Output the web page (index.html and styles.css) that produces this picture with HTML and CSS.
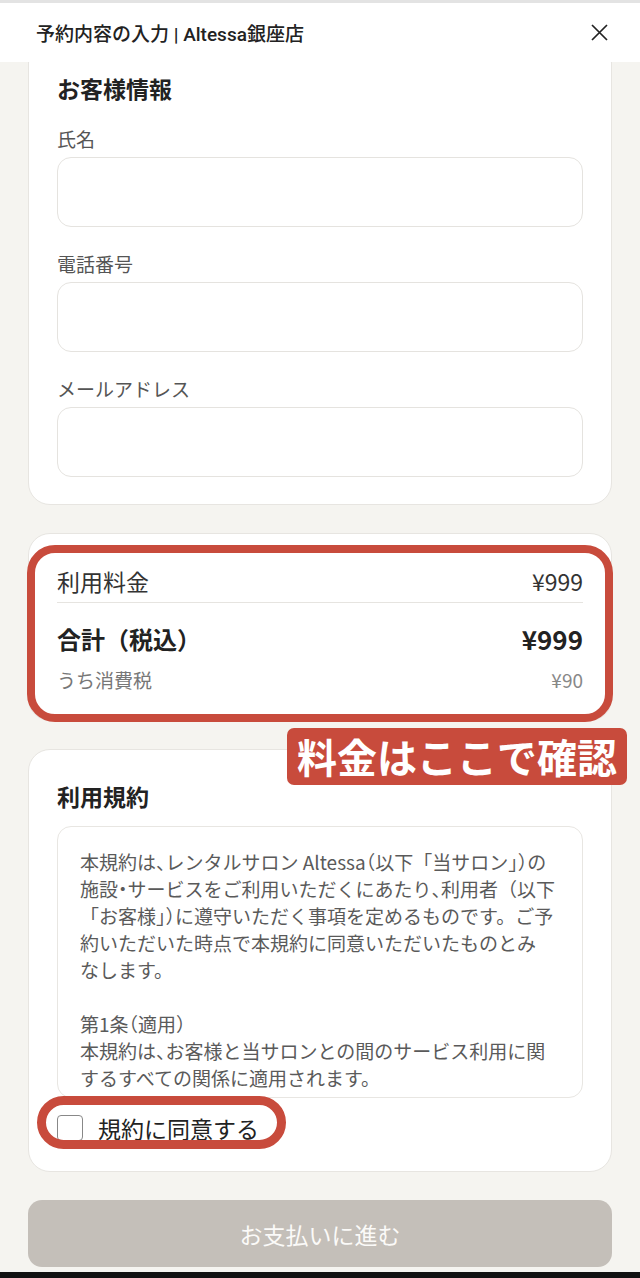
FILE: index.html
```html
<!DOCTYPE html>
<html lang="ja">
<head>
    <meta charset="UTF-8">
    <meta name="viewport" content="width=device-width, initial-scale=1.0">
    <title>予約内容の入力 | Altessa銀座店</title>
    <link rel="stylesheet" href="styles.css">
</head>
<body>
    <header class="header">
        <div class="header-title">予約内容の入力 | Altessa銀座店</div>
        <svg class="close-icon" viewBox="0 0 17 17" aria-label="閉じる">
            <path d="M1 1 L16 16 M16 1 L1 16" stroke="#222" stroke-width="1.7" fill="none"/>
        </svg>
    </header>

    <div class="container">
        <section class="card customer-card">
            <h2 class="card-title">お客様情報</h2>
            <div class="field">
                <label class="field-label">氏名</label>
                <input class="field-input" type="text">
            </div>
            <div class="field">
                <label class="field-label">電話番号</label>
                <input class="field-input" type="tel">
            </div>
            <div class="field">
                <label class="field-label">メールアドレス</label>
                <input class="field-input" type="email">
            </div>
        </section>

        <section class="card price-card">
            <div class="price-row base">
                <span>利用料金</span>
                <span>¥999</span>
            </div>
            <div class="price-row total">
                <span>合計（税込）</span>
                <span class="total-amount">¥999</span>
            </div>
            <div class="price-row tax">
                <span>うち消費税</span>
                <span class="tax-amount">¥90</span>
            </div>
            <div class="mark-frame"></div>
            <div class="mark-label">料金はここで確認</div>
        </section>

        <section class="card terms-card">
            <h2 class="card-title">利用規約</h2>
            <div class="terms-box">
                <p>本規約は<span class="half">、</span>レンタルサロン Altessa<span class="half">（</span>以下「当サロン<span class="half">」）</span>の<br>施設<span class="half">・</span>サービスをご利用いただくにあたり<span class="half">、</span>利用者（以下<br>「お客様<span class="half">」）</span>に遵守いただく事項を定めるものです。ご予<br>約いただいた時点で本規約に同意いただいたものとみ<br>なします。</p>
                <p>第1条<span class="half">（</span>適用<span class="half">）</span><br>本規約は<span class="half">、</span>お客様と当サロンとの間のサービス利用に関<br>するすべての関係に適用されます。</p>
            </div>
            <label class="agree-row">
                <span class="checkbox"></span>
                <span class="agree-text">規約に同意する</span>
                <span class="mark-oval"></span>
            </label>
        </section>

        <button class="pay-btn" disabled>お支払いに進む</button>
    </div>

    <div class="system-bar"></div>
</body>
</html>
```

FILE: styles.css
```css
* {
    box-sizing: border-box;
}
body {
    margin: 0;
    background-color: #f5f4f0;
    font-family: "Noto Sans CJK JP", sans-serif;
    color: #222;
}
.header {
    position: fixed;
    top: 0;
    left: 0;
    right: 0;
    height: 62px;
    border-top: 3px solid #e3e3e3;
    background-color: #fff;
    display: flex;
    align-items: center;
    justify-content: space-between;
    padding: 0 32px 0 36px;
    z-index: 10;
}
.header-title {
    font-family: Roboto, "Noto Sans CJK JP", sans-serif;
    font-size: 19px;
    font-weight: 500;
    color: #222;
}
.close-icon {
    width: 17px;
    height: 17px;
    display: block;
}
.container {
    display: flex;
    flex-direction: column;
    gap: 28px;
    padding: 41px 28px 5px;
}
.card {
    background-color: #fff;
    border: 1px solid #e7e5e1;
    border-radius: 22px;
    padding: 28px;
}
.card-title {
    margin: 0;
    font-size: 23px;
    font-weight: 700;
    line-height: 36px;
}
.customer-card {
    padding-bottom: 27px;
}
.field {
    margin-top: 23px;
}
.card-title + .field {
    margin-top: 19px;
}
.field-label {
    display: block;
    font-size: 19px;
    line-height: 28px;
    color: #555;
    margin-bottom: 4px;
}
.field-input {
    display: block;
    width: 100%;
    height: 70px;
    border: 1px solid #e5e3df;
    border-radius: 14px;
    background-color: #fff;
}
.price-card {
    position: relative;
    padding: 27px 28px;
}
.price-row {
    display: flex;
    justify-content: space-between;
    align-items: center;
}
.price-row.base {
    font-size: 23px;
    line-height: 40px;
    padding-bottom: 1px;
    border-bottom: 1px solid #e6e4e0;
    color: #333;
}
.price-row.total {
    margin-top: 16px;
    font-size: 24px;
    font-weight: 700;
    line-height: 40px;
}
.total-amount {
    font-size: 26px;
}
.price-row.tax {
    margin-top: 8px;
    font-size: 19px;
    line-height: 26px;
    color: #777;
}
.tax-amount {
    font-size: 19px;
    color: #888;
}
.mark-frame {
    position: absolute;
    top: 11px;
    left: -2px;
    right: -2px;
    bottom: -2px;
    border: 8px solid #c84b3c;
    border-radius: 28px;
}
.mark-label {
    position: absolute;
    top: 194px;
    left: 258px;
    height: 57px;
    padding: 0 10px;
    border-radius: 7px;
    background-color: #c84b3c;
    color: #fff;
    font-size: 40px;
    font-weight: 700;
    line-height: 57px;
    white-space: nowrap;
    z-index: 2;
}
.terms-card {
    padding: 28px 28px 25px;
}
.terms-box {
    margin-top: 12px;
    height: 272px;
    overflow: hidden;
    border: 1px solid #e8e6e2;
    border-radius: 14px;
    padding: 21px 14px 0 22px;
    font-size: 19px;
    line-height: 27px;
    color: #5a5a5a;
    white-space: nowrap;
}
.terms-box p {
    margin: 0 0 27px;
}
.half {
    font-feature-settings: "halt";
}
.agree-row {
    position: relative;
    display: flex;
    align-items: center;
    gap: 15px;
    height: 36px;
    margin-top: 12px;
}
.checkbox {
    width: 26px;
    height: 26px;
    border: 1.5px solid #888;
    border-radius: 4px;
    background-color: #fff;
}
.agree-text {
    font-size: 23px;
    color: #222;
}
.mark-oval {
    position: absolute;
    top: -14px;
    left: -20px;
    width: 249px;
    height: 53px;
    border: 9px solid #c84b3c;
    border-radius: 27px;
}
.pay-btn {
    height: 67px;
    border: none;
    border-radius: 14px;
    background-color: #c4bfb9;
    color: #fbfaf8;
    font-family: "Noto Sans CJK JP", sans-serif;
    font-size: 23px;
}
.system-bar {
    height: 6px;
    background-color: #111;
}
```
